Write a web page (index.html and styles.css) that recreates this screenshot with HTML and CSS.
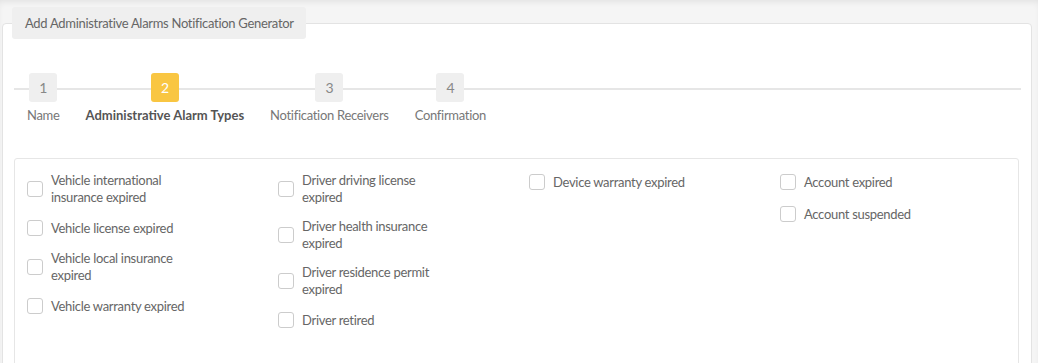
FILE: index.html
```html
<!DOCTYPE html>
<html lang="en">
<head>
    <meta charset="UTF-8">
    <meta name="viewport" content="width=device-width, initial-scale=1.0">
    <title>Add Administrative Alarms Notification Generator</title>
    <link rel="stylesheet" href="styles.css">
</head>
<body>

<div class="page">
    <div class="tab-title">Add Administrative Alarms Notification Generator</div>

    <div class="card">
        <div class="steps">
            <div class="step">
                <span class="step-num">1</span>
                <span class="step-label">Name</span>
            </div>
            <div class="step active">
                <span class="step-num">2</span>
                <span class="step-label">Administrative Alarm Types</span>
            </div>
            <div class="step">
                <span class="step-num">3</span>
                <span class="step-label">Notification Receivers</span>
            </div>
            <div class="step">
                <span class="step-num">4</span>
                <span class="step-label">Confirmation</span>
            </div>
        </div>

        <div class="panel">
            <div class="col">
                <label class="check"><input type="checkbox"><span>Vehicle international insurance expired</span></label>
                <label class="check"><input type="checkbox"><span>Vehicle license expired</span></label>
                <label class="check"><input type="checkbox"><span>Vehicle local insurance expired</span></label>
                <label class="check"><input type="checkbox"><span>Vehicle warranty expired</span></label>
            </div>
            <div class="col">
                <label class="check"><input type="checkbox"><span>Driver driving license expired</span></label>
                <label class="check"><input type="checkbox"><span>Driver health insurance expired</span></label>
                <label class="check"><input type="checkbox"><span>Driver residence permit expired</span></label>
                <label class="check"><input type="checkbox"><span>Driver retired</span></label>
            </div>
            <div class="col">
                <label class="check"><input type="checkbox"><span>Device warranty expired</span></label>
            </div>
            <div class="col">
                <label class="check"><input type="checkbox"><span>Account expired</span></label>
                <label class="check"><input type="checkbox"><span>Account suspended</span></label>
            </div>
        </div>
    </div>
</div>

</body>
</html>
```

FILE: styles.css
```css
body {
    margin: 0;
    font-family: Lato, "Liberation Sans", sans-serif;
    font-size: 13px;
    letter-spacing: -0.3px;
    color: #666;
    background-color: #f5f5f5;
    box-shadow: inset 0 4px 6px -2px rgba(0, 0, 0, 0.08);
    height: 363px;
    overflow: hidden;
}

.page {
    padding: 7px 6px 0 2px;
}

.tab-title {
    position: relative;
    z-index: 1;
    width: fit-content;
    margin-left: 10px;
    margin-bottom: -16px;
    padding: 0 12px 0 13px;
    height: 32px;
    line-height: 32px;
    background-color: #efefef;
    border-radius: 3px;
    color: #666;
}

.card {
    background: white;
    border: 1px solid #e3e3e3;
    border-radius: 4px;
    padding: 49px 0 40px 11px;
    min-height: 400px;
}

.steps {
    display: flex;
    gap: 26px;
    padding-left: 13px;
    margin-right: 10px;
    background: linear-gradient(#e6e6e6, #e6e6e6) no-repeat 0 15px / 100% 2px;
}

.step {
    display: flex;
    flex-direction: column;
    align-items: center;
    gap: 5px;
}

.step-num {
    width: 28px;
    height: 29px;
    line-height: 29px;
    text-align: center;
    background-color: #efefef;
    border-radius: 3px;
    color: #888;
    font-size: 14px;
}

.step-label {
    line-height: 17px;
    color: #777;
}

.step.active .step-num {
    background-color: #f9c642;
    color: white;
}

.step.active .step-label {
    font-weight: bold;
    letter-spacing: 0;
    color: #555;
}

.panel {
    margin-top: 34px;
    margin-right: 12px;
    border: 1px solid #e6e6e6;
    border-radius: 3px;
    padding: 13px 13px 40px 12px;
    display: grid;
    grid-template-columns: repeat(4, 251px);
}

.col {
    display: flex;
    flex-direction: column;
    gap: 12px;
}

.check {
    display: flex;
    align-items: center;
    gap: 8px;
    min-height: 20px;
}

.check input {
    appearance: none;
    -webkit-appearance: none;
    margin: 0;
    flex: none;
    width: 16px;
    height: 16px;
    border: 1px solid #ccc;
    border-radius: 3px;
    background: white;
}

.check span {
    max-width: 150px;
    line-height: 17px;
    color: #666;
}
```
